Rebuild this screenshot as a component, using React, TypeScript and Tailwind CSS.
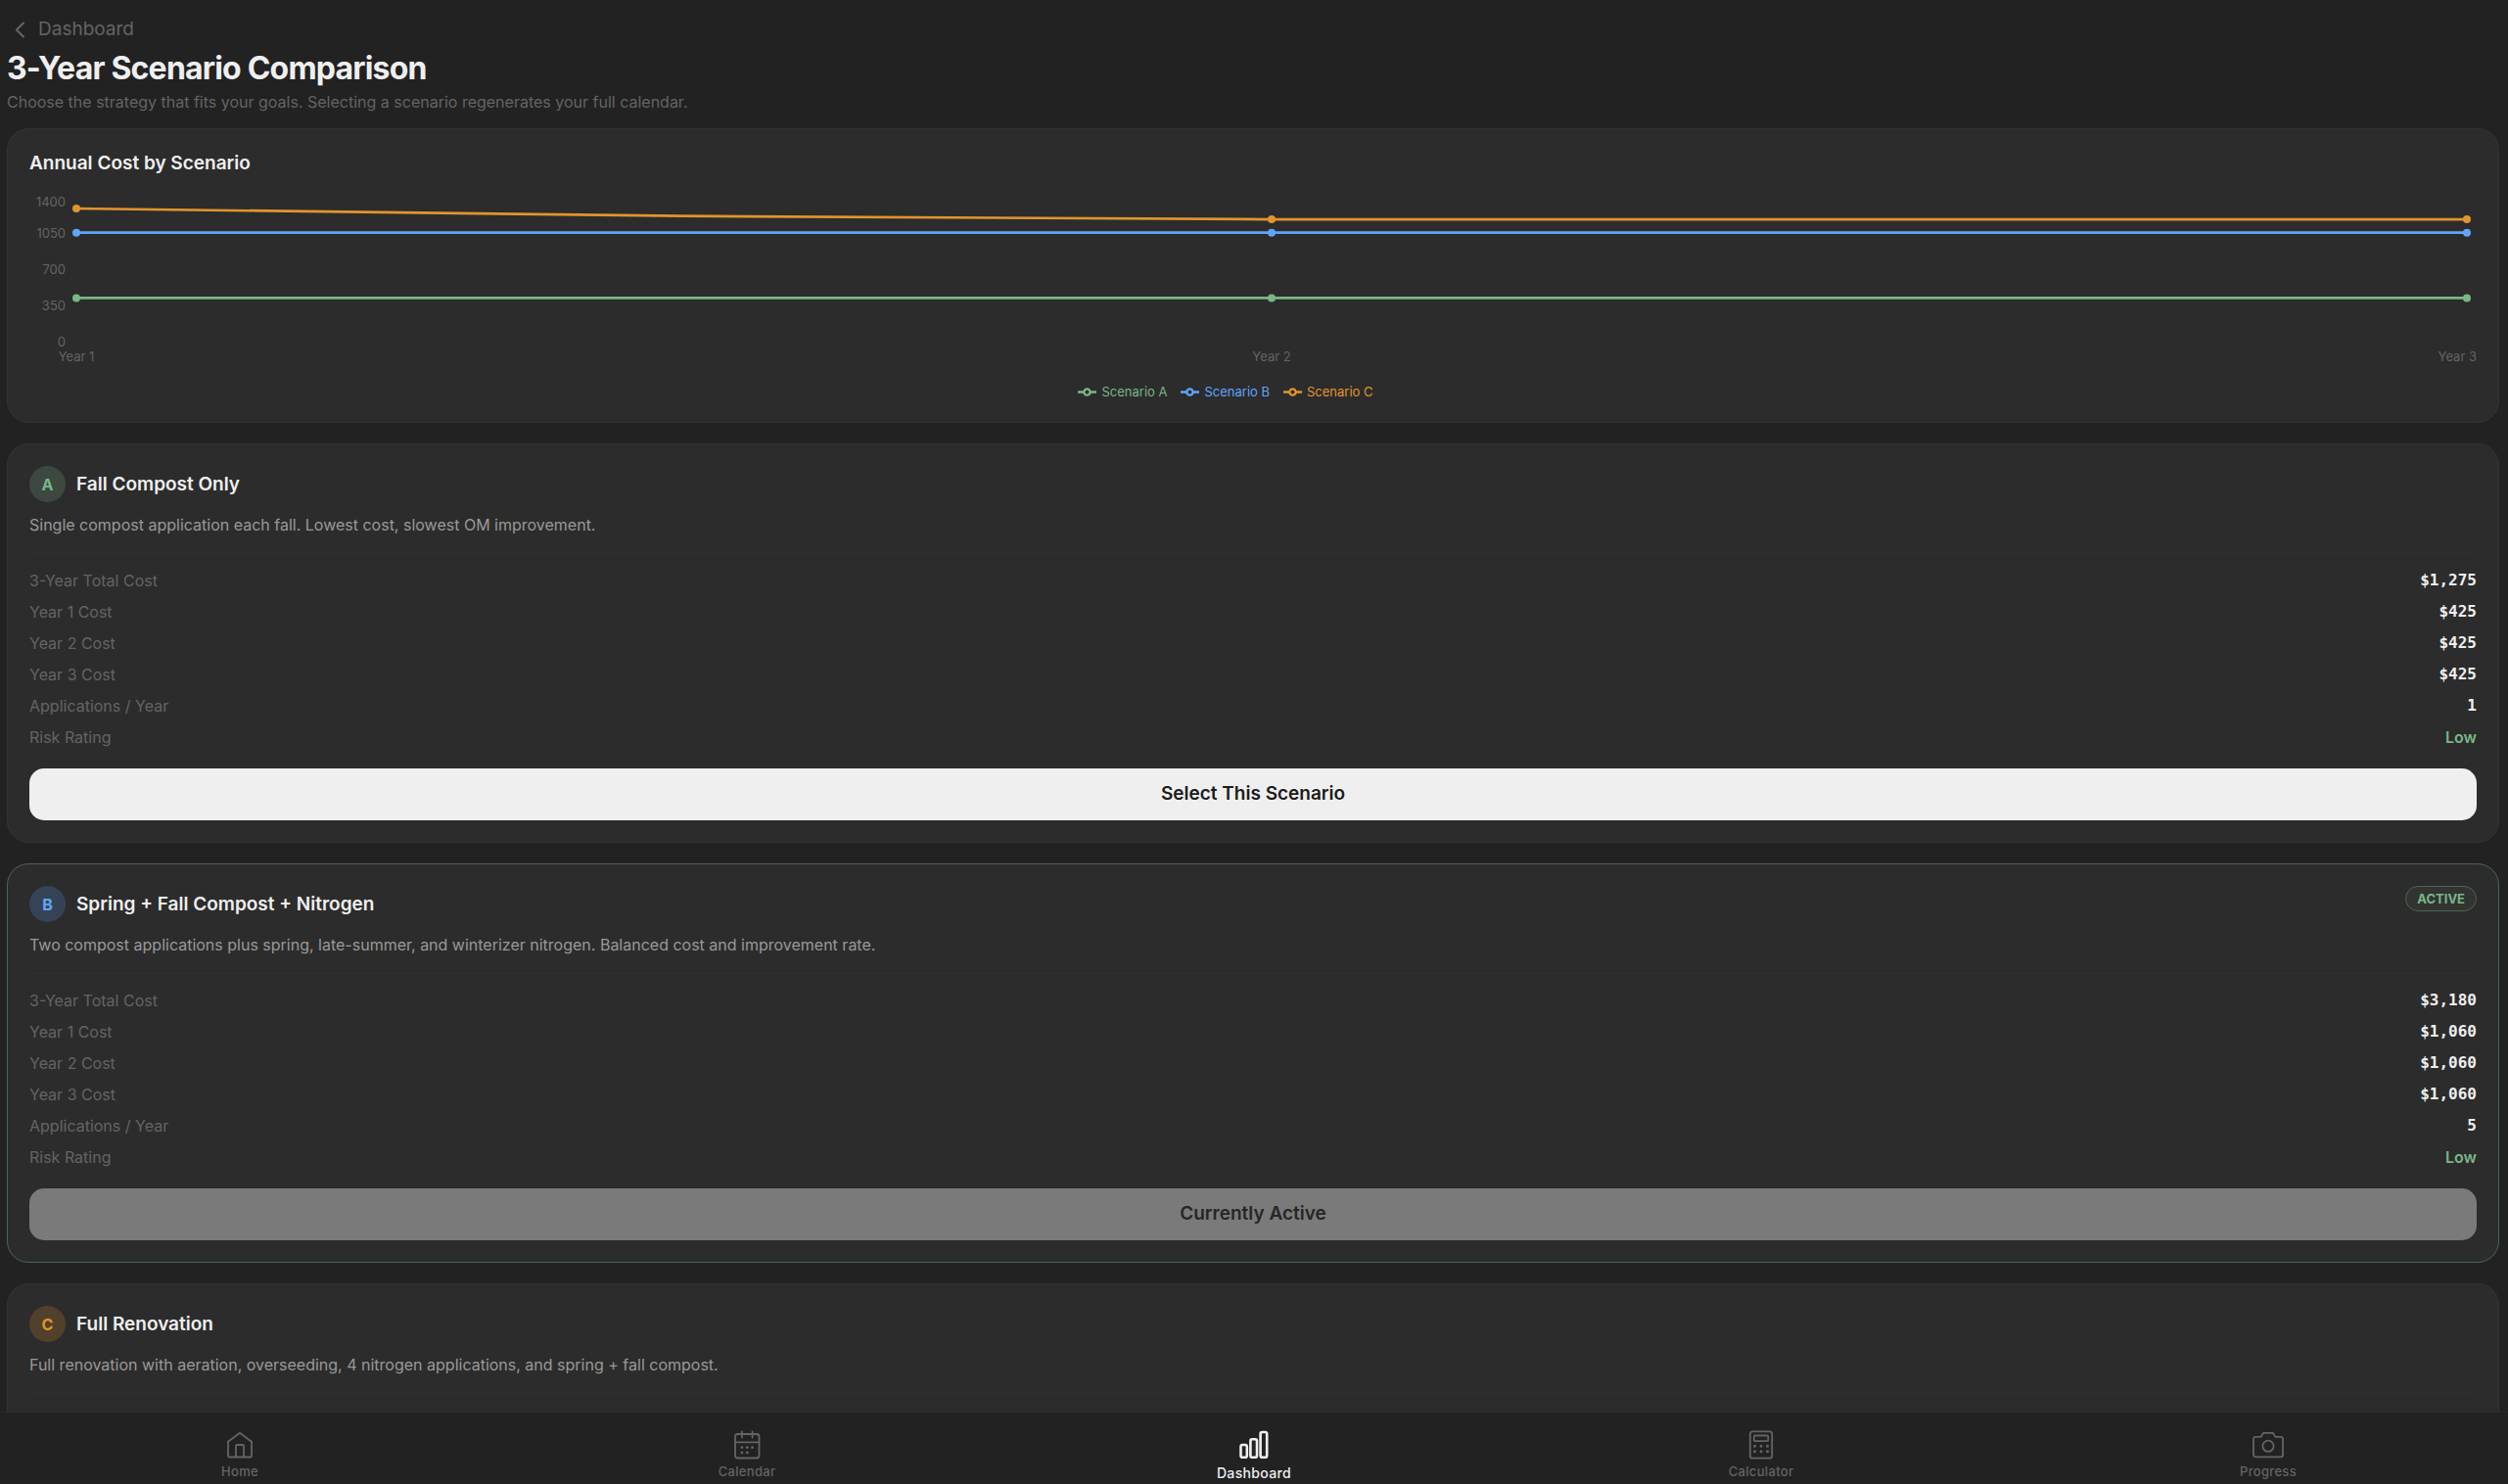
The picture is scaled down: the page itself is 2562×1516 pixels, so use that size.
import React from 'react';

type Scenario = {
  id: string;
  name: string;
  description: string;
  costs: string[];
  applications: string;
  risk: string;
  active?: boolean;
  badge: string;
};

const scenarios: Scenario[] = [
  {
    id: 'A',
    name: 'Fall Compost Only',
    description: 'Single compost application each fall. Lowest cost, slowest OM improvement.',
    costs: ['$1,275', '$425', '$425', '$425'],
    applications: '1',
    risk: 'Low',
    badge: 'bg-[#3d4840] text-[#7ab688]',
  },
  {
    id: 'B',
    name: 'Spring + Fall Compost + Nitrogen',
    description:
      'Two compost applications plus spring, late-summer, and winterizer nitrogen. Balanced cost and improvement rate.',
    costs: ['$3,180', '$1,060', '$1,060', '$1,060'],
    applications: '5',
    risk: 'Low',
    active: true,
    badge: 'bg-[#364356] text-[#60a5fa]',
  },
  {
    id: 'C',
    name: 'Full Renovation',
    description: 'Full renovation with aeration, overseeding, 4 nitrogen applications, and spring + fall compost.',
    costs: ['$3,675', '$1,295', '$1,190', '$1,190'],
    applications: '7',
    risk: 'Medium',
    badge: 'bg-[#51412b] text-[#e1952d]',
  },
];

const series = [
  { name: 'Scenario A', color: '#7ab688', values: [425, 425, 425] },
  { name: 'Scenario B', color: '#60a5fa', values: [1060, 1060, 1060] },
  { name: 'Scenario C', color: '#e1952d', values: [1295, 1190, 1190] },
];

const PLOT_TOP = 4;
const PLOT_HEIGHT = 147;
const yOf = (v: number) => PLOT_TOP + PLOT_HEIGHT * (1 - v / 1400);

function Plot() {
  return (
    <svg className="block h-[158px] w-full overflow-visible" aria-label="Annual cost by scenario, years 1 to 3" role="img">
      {series.map((s) => {
        const [a, b, c] = s.values.map(yOf);
        return (
          <g key={s.name} stroke={s.color} fill={s.color}>
            <svg width="100%" height="158" viewBox="0 0 1000 158" preserveAspectRatio="none" overflow="visible">
              <path
                d={`M0 ${a}C167 ${a + (b - a) * 0.5} 333 ${b} 500 ${b}C667 ${b} 833 ${c} 1000 ${c}`}
                fill="none"
                strokeWidth="2.67"
                vectorEffect="non-scaling-stroke"
              />
            </svg>
            <circle cx="0" cy={a} r="4" stroke="none" />
            <circle cx="50%" cy={b} r="4" stroke="none" />
            <circle cx="100%" cy={c} r="4" stroke="none" />
          </g>
        );
      })}
    </svg>
  );
}

function CostChart() {
  return (
    <section className="rounded-[22px] border border-[#333333] bg-[#2c2c2c] px-[22px] pt-[22px] pb-[23px]">
      <h2 className="text-[19px] leading-[26px] font-semibold">Annual Cost by Scenario</h2>
      <div className="mt-[18px] flex text-[13px] leading-4 text-[#646464]">
        <div className="flex w-[37px] flex-col items-end">
          <span>1400</span>
          <div className="mt-4 flex flex-col items-end gap-[21px]">
            <span>1050</span>
            <span>700</span>
            <span>350</span>
            <span>0</span>
          </div>
        </div>
        <div className="mr-[10px] ml-[11px] flex-1">
          <Plot />
          <div className="-mr-[10px] flex">
            <span className="flex w-0 justify-center whitespace-nowrap">Year 1</span>
            <span className="flex flex-1 justify-center whitespace-nowrap">Year 2</span>
            <span className="flex w-[10px] justify-end whitespace-nowrap">Year 3</span>
          </div>
        </div>
      </div>
      <ul className="mt-5 mr-14 flex justify-center gap-[14px] text-[13px] leading-4">
        {series.map((s) => (
          <li key={s.name} className="flex h-4 items-center gap-[5px]" style={{ color: s.color }}>
            <svg width="19" height="19" viewBox="0 0 32 32" fill="none" stroke="currentColor" strokeWidth="4">
              <path d="M0 16h10.700a5.300 5.300 0 1 1 10.600 0H32M21.300 16a5.300 5.300 0 1 1-10.600 0" />
            </svg>
            {s.name}
          </li>
        ))}
      </ul>
    </section>
  );
}

function ScenarioCard({ s }: { s: Scenario }) {
  const labels = ['3-Year Total Cost', 'Year 1 Cost', 'Year 2 Cost', 'Year 3 Cost'];
  return (
    <section
      className={`rounded-[22px] border bg-[#2c2c2c] p-[22px] ${s.active ? 'border-[#4b6551]' : 'border-[#333333]'}`}
    >
      <div className="flex items-start justify-between">
        <div className="flex items-center gap-[11px]">
          <span className={`flex size-[37px] items-center justify-center rounded-full text-[16px] font-bold ${s.badge}`}>
            {s.id}
          </span>
          <h2 className="text-[19px] leading-[26px] font-semibold">{s.name}</h2>
        </div>
        {s.active && (
          <span className="rounded-full border border-[#4b6551] bg-[#323432] px-[11px] py-1 text-[13px] leading-4 font-bold text-[#7ab688]">
            ACTIVE
          </span>
        )}
      </div>
      <p className="mt-[10px] text-[16px] leading-[26px] text-[#999999]">{s.description}</p>
      <dl className="mt-4 border-t border-[#303030] pt-[11px] text-[16px] leading-6">
        {labels.map((l, i) => (
          <div key={l} className="flex justify-between py-1">
            <dt className="text-[#646464]">{l}</dt>
            <dd className="font-['DejaVu_Sans_Mono',monospace] font-bold">{s.costs[i]}</dd>
          </div>
        ))}
        <div className="flex justify-between py-1">
          <dt className="text-[#646464]">Applications / Year</dt>
          <dd className="font-['DejaVu_Sans_Mono',monospace] font-bold">{s.applications}</dd>
        </div>
        <div className="flex justify-between py-1">
          <dt className="text-[#646464]">Risk Rating</dt>
          <dd className="font-semibold text-[#7ab688]">{s.risk}</dd>
        </div>
      </dl>
      <button
        type="button"
        disabled={s.active}
        className="mt-4 block h-[53px] w-full rounded-[15px] bg-[#efefef] text-[19px] font-semibold text-[#1c1c1c] disabled:bg-[#7a7a7a] disabled:text-[#262626]"
      >
        {s.active ? 'Currently Active' : 'Select This Scenario'}
      </button>
    </section>
  );
}

const icons: Record<string, React.ReactNode> = {
  Home: (
    <path d="M4 12.800 16 3.800l12 9V27.200a1.300 1.300 0 0 1-1.300 1.300H5.300A1.300 1.300 0 0 1 4 27.200zM12 28.500V17a1 1 0 0 1 1-1h6a1 1 0 0 1 1 1v11.500" />
  ),
  Calendar: (
    <>
      <rect x="4" y="5" width="24.500" height="24.500" rx="2.500" />
      <path d="M4 13.300h24.500M10.900 2.500v6M21.600 2.500v6" />
      <path d="M10.900 18.700h.01M16.250 18.700h.01M21.600 18.700h.01M10.900 24h.01M16.250 24h.01" strokeWidth="2.800" />
    </>
  ),
  Dashboard: (
    <>
      <rect x="2.500" y="16" width="6.300" height="12.700" rx="1.800" />
      <rect x="12.400" y="10.300" width="6.600" height="18.400" rx="1.800" />
      <rect x="22.600" y="3" width="6.600" height="25.700" rx="1.800" />
    </>
  ),
  Calculator: (
    <>
      <rect x="4.800" y="2.300" width="22.400" height="27.400" rx="2.500" />
      <rect x="8.800" y="6.500" width="14.400" height="5.700" rx="1" />
      <path d="M9.500 17.300h.01M16 17.300h.01M22.500 17.300h.01M9.500 22.700h.01M16 22.700h.01M22.500 22.700h.01" strokeWidth="3" />
    </>
  ),
  Progress: (
    <>
      <path d="M3 7.900H8.500L11 3.900h10l2.500 4H29A2 2 0 0 1 31 9.900V26.300A2 2 0 0 1 29 28.300H3A2 2 0 0 1 1 26.300V9.900A2 2 0 0 1 3 7.900z" />
      <circle cx="16" cy="17.300" r="5.600" />
    </>
  ),
};

function BottomNav() {
  return (
    <nav className="flex h-[74px] shrink-0 items-start gap-7 border-t border-[#2c2c2c] bg-[#222222]">
      {Object.keys(icons).map((name) => {
        const active = name === 'Dashboard';
        return (
          <a
            key={name}
            href={`#${name.toLowerCase()}`}
            aria-current={active ? 'page' : undefined}
            className={`flex flex-1 flex-col items-center pt-[17px] font-medium tracking-wide ${
              active ? 'text-[14px] leading-5 text-[#efefef]' : 'text-[13px] leading-4 text-[#646464]'
            }`}
          >
            <svg
              className="size-8"
              viewBox="0 0 32 32"
              fill="none"
              stroke="currentColor"
              strokeWidth={active ? 2.6 : 1.8}
              strokeLinecap="round"
              strokeLinejoin="round"
            >
              {icons[name]}
            </svg>
            <span className="mt-[3px]">{name}</span>
          </a>
        );
      })}
    </nav>
  );
}

export default function App() {
  return (
    <div className="flex h-screen flex-col overflow-hidden bg-[#222222] font-['Inter',sans-serif] text-[#efefef]">
      <main className="min-h-0 flex-1 overflow-y-auto pr-[9px] pl-[7px] [scrollbar-width:none]">
        <a href="#dashboard" className="mt-4 flex w-fit items-center gap-1 text-[19px] leading-7 text-[#646464]">
          <svg
            className="size-7"
            viewBox="0 0 24 24"
            fill="none"
            stroke="currentColor"
            strokeWidth="1.800"
            strokeLinecap="round"
            strokeLinejoin="round"
          >
            <path d="M14.500 6.500 8.500 12.500l6 6" />
          </svg>
          Dashboard
        </a>
        <h1 className="mt-[6px] text-[32px] leading-[40px] font-bold tracking-tight">3-Year Scenario Comparison</h1>
        <p className="mt-[2px] text-[16px] leading-6 text-[#646464]">
          Choose the strategy that fits your goals. Selecting a scenario regenerates your full calendar.
        </p>
        <div className="mt-[15px] flex flex-col gap-[21px] pb-[21px]">
          <CostChart />
          {scenarios.map((s) => (
            <ScenarioCard key={s.id} s={s} />
          ))}
        </div>
      </main>
      <BottomNav />
    </div>
  );
}
